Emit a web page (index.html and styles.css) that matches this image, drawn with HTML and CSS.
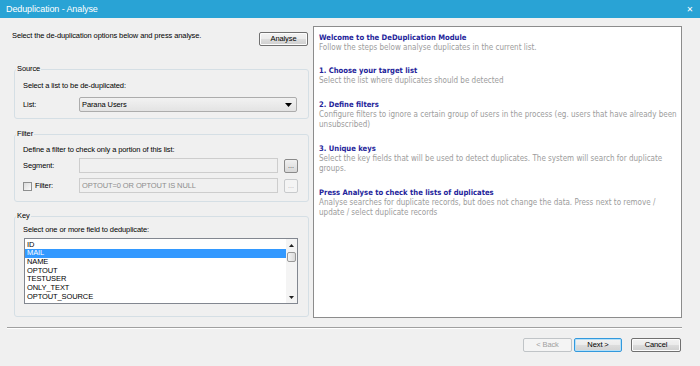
FILE: index.html
```html
<!DOCTYPE html>
<html lang="en">
<head>
  <meta charset="UTF-8">
  <title>Deduplication - Analyse</title>
  <link rel="stylesheet" href="styles.css">
</head>
<body>
<div class="window">
  <div class="titlebar">
    <span class="title">Deduplication - Analyse</span>
    <span class="close">&#x2715;</span>
  </div>

  <div class="main">
    <div class="options">
      <div class="intro">
        <p>Select the de-duplication options below and press analyse.</p>
        <button type="button" class="btn analyse">Analyse</button>
      </div>

      <fieldset class="group source">
        <legend>Source</legend>
        <p class="hint">Select a list to be de-duplicated:</p>
        <div class="row">
          <label class="row-label">List:</label>
          <div class="select">
            <span>Parana Users</span>
            <svg width="7" height="4" viewBox="0 0 7 4"><path d="M0 0H7L3.5 4Z" fill="#000"/></svg>
          </div>
        </div>
      </fieldset>

      <fieldset class="group filter">
        <legend>Filter</legend>
        <p class="hint">Define a filter to check only a portion of this list:</p>
        <div class="row">
          <label class="row-label">Segment:</label>
          <div class="field"></div>
          <button type="button" class="dots">...</button>
        </div>
        <div class="row">
          <label class="row-label check"><span class="box"></span>Filter:</label>
          <div class="field">OPTOUT=0 OR OPTOUT IS NULL</div>
          <button type="button" class="dots" disabled>...</button>
        </div>
      </fieldset>

      <fieldset class="group key">
        <legend>Key</legend>
        <p class="hint">Select one or more field to deduplicate:</p>
        <div class="listbox">
          <ul>
            <li>ID</li>
            <li class="selected">MAIL</li>
            <li>NAME</li>
            <li>OPTOUT</li>
            <li>TESTUSER</li>
            <li>ONLY_TEXT</li>
            <li>OPTOUT_SOURCE</li>
          </ul>
          <div class="scrollbar">
            <div class="arrow">
              <svg width="5" height="3" viewBox="0 0 5 3"><path d="M0 3H5L2.5 0Z" fill="#222"/></svg>
            </div>
            <div class="thumb"></div>
            <div class="track"></div>
            <div class="arrow">
              <svg width="5" height="3" viewBox="0 0 5 3"><path d="M0 0H5L2.5 3Z" fill="#222"/></svg>
            </div>
          </div>
        </div>
      </fieldset>
    </div>

    <div class="info">
      <h2>Welcome to the DeDuplication Module</h2>
      <p>Follow the steps below analyse duplicates in the current list.</p>

      <h2>1. Choose your target list</h2>
      <p>Select the list where duplicates should be detected</p>

      <h2>2. Define filters</h2>
      <p>Configure filters to ignore a certain group of users in the process (eg. users that have already been unsubscribed)</p>

      <h2>3. Unique keys</h2>
      <p>Select the key fields that will be used to detect duplicates. The system will search for duplicate groups.</p>

      <h2>Press Analyse to check the lists of duplicates</h2>
      <p>Analyse searches for duplicate records, but does not change the data. Press next to remove / update / select duplicate records</p>
    </div>
  </div>

  <div class="separator"></div>

  <div class="footer">
    <button type="button" class="btn back" disabled>&lt; Back</button>
    <button type="button" class="btn next">Next &gt;</button>
    <button type="button" class="btn cancel">Cancel</button>
  </div>
</div>
</body>
</html>
```

FILE: styles.css
```css
body {
  margin: 0;
  font-family: "Liberation Sans", Arial, sans-serif;
  font-size: 7.5px;
  letter-spacing: -0.1px;
  color: #000;
}

.window {
  width: 700px;
  height: 366px;
  background: #f0f0f0;
  display: flex;
  flex-direction: column;
}

.titlebar {
  height: 18px;
  flex: none;
  background: #29a3d5;
  color: #fff;
  display: flex;
  align-items: center;
  justify-content: space-between;
  padding: 0 7px 0 6px;
  font-size: 9px;
}

.close {
  font-family: "DejaVu Sans", sans-serif;
  font-size: 8px;
  font-weight: bold;
}

.main {
  display: flex;
  gap: 4px;
  padding: 8px 18px 0 12px;
}

.options {
  width: 297px;
  display: flex;
  flex-direction: column;
}

.intro {
  display: flex;
  justify-content: space-between;
  align-items: flex-start;
  height: 14px;
  margin-top: 6px;
}

.intro p {
  margin: 0;
  line-height: 8px;
}

.btn {
  height: 14px;
  padding: 0;
  box-sizing: border-box;
  font: inherit;
  letter-spacing: inherit;
  line-height: 12px;
  color: #000;
  border: 1px solid #707070;
  border-radius: 2px;
  background: linear-gradient(#f2f2f2 0, #ebebeb 50%, #dddddd 50%, #cfcfcf 100%);
  box-shadow: inset 0 0 0 1px #fcfcfc;
}

.analyse {
  width: 49px;
  margin-right: 1px;
}

/* group boxes */
.group {
  width: 295px;
  box-sizing: border-box;
  margin: 0 0 0 2px;
  padding: 0 9px 6px 8px;
  border: 1px solid #d5dfe5;
  border-radius: 3px;
  min-width: 0;
}

.group legend {
  padding: 0 1px;
  margin-left: -7px;
  line-height: 10px;
}

.hint {
  margin: 0;
  line-height: 10px;
}

.source {
  margin-top: 18px;
}

.source .hint {
  margin-top: 7px;
}

.source .row {
  margin-top: 6px;
}

.filter {
  margin-top: 10px;
  padding-bottom: 8px;
}

.filter .hint {
  margin-top: 6px;
}

.filter .row {
  margin-top: 3px;
}

.filter .row + .row {
  margin-top: 5px;
}

.key {
  margin-top: 9px;
  padding-bottom: 12px;
}

.key .hint {
  margin-top: 4px;
}

.row {
  display: flex;
  align-items: center;
  height: 15px;
}

.row-label {
  width: 56px;
  flex: none;
  display: flex;
  align-items: center;
}

.box {
  width: 9px;
  height: 9px;
  box-sizing: border-box;
  border: 1px solid #8e8f8f;
  background: linear-gradient(135deg, #dcdcdc, #fbfbfb);
  margin-right: 3px;
  margin-top: 2px;
}

.select {
  width: 218px;
  height: 15px;
  box-sizing: border-box;
  border: 1px solid #acacac;
  border-radius: 2px;
  background: linear-gradient(#f2f2f2, #e3e3e3);
  display: flex;
  align-items: center;
  justify-content: space-between;
  padding: 0 4px 0 2px;
}

.field {
  width: 199px;
  height: 15px;
  box-sizing: border-box;
  border: 1px solid #cdcdcd;
  background: #f0f0f0;
  color: #8d8d8d;
  padding-left: 2px;
  line-height: 13px;
}

.dots {
  width: 14px;
  height: 14px;
  margin-left: 6px;
  padding: 0;
  box-sizing: border-box;
  font: inherit;
  font-size: 7px;
  line-height: 10px;
  color: #333;
  border: 1px solid #8a8a8a;
  border-radius: 2px;
  background: linear-gradient(#f0f0f0, #d8d8d8);
}

.dots:disabled {
  color: #b0b0b0;
  border-color: #c8cacc;
  background: #f4f4f4;
}

/* key list */
.listbox {
  width: 274px;
  height: 66px;
  margin: 3px 0 0 1px;
  box-sizing: border-box;
  border: 1px solid #828790;
  background: #fff;
  display: flex;
}

.listbox ul {
  flex: 1;
  margin: 0;
  padding: 1.5px 0 0;
  list-style: none;
  overflow: hidden;
}

.listbox li {
  height: 8.7px;
  line-height: 8.7px;
  padding-left: 2px;
  white-space: nowrap;
}

.listbox li.selected {
  background: #3399ff;
  color: #fff;
}

.scrollbar {
  width: 11px;
  flex: none;
  background: #f4f4f4;
  display: flex;
  flex-direction: column;
  align-items: center;
}

.scrollbar .arrow {
  height: 12px;
  display: flex;
  align-items: center;
  justify-content: center;
}

.scrollbar .thumb {
  width: 9px;
  height: 10px;
  margin-top: 1px;
  box-sizing: border-box;
  border: 1px solid #999;
  border-radius: 2px;
  background: linear-gradient(90deg, #f4f4f4, #dadada);
}

.scrollbar .track {
  flex: 1;
}

/* help panel */
.info {
  width: 369px;
  height: 292px;
  box-sizing: border-box;
  background: #fff;
  border: 1px solid #8c8c8c;
  padding: 4.5px 3px 0 5px;
  font-family: "DejaVu Sans Condensed", "DejaVu Sans", sans-serif;
  font-size: 8px;
  letter-spacing: 0;
}

.info h2 {
  margin: 0;
  font-size: 7.6px;
  font-weight: bold;
  line-height: 11px;
  color: #23239a;
}

.info p {
  margin: 0 0 12px;
  line-height: 10.5px;
  color: #9c9c9c;
}

.separator {
  margin: 9px 18px 0 7px;
  border-top: 1px solid #a0a0a0;
  border-bottom: 1px solid #fff;
}

.footer {
  display: flex;
  justify-content: flex-end;
  padding: 9px 19px 0 0;
}

.back {
  width: 49px;
}

.back:disabled {
  color: #a0a0a0;
  border-color: #c0c4c7;
  background: #f4f4f4;
  box-shadow: none;
}

.next {
  width: 48px;
  margin-left: 2px;
  border-color: #3399dd;
  box-shadow: inset 0 0 0 1px #b5e0f8;
  background: linear-gradient(#f2f2f2 0, #ebebeb 50%, #dddddd 50%, #d2d2d2 100%);
}

.cancel {
  width: 50px;
  margin-left: 9px;
}
```
